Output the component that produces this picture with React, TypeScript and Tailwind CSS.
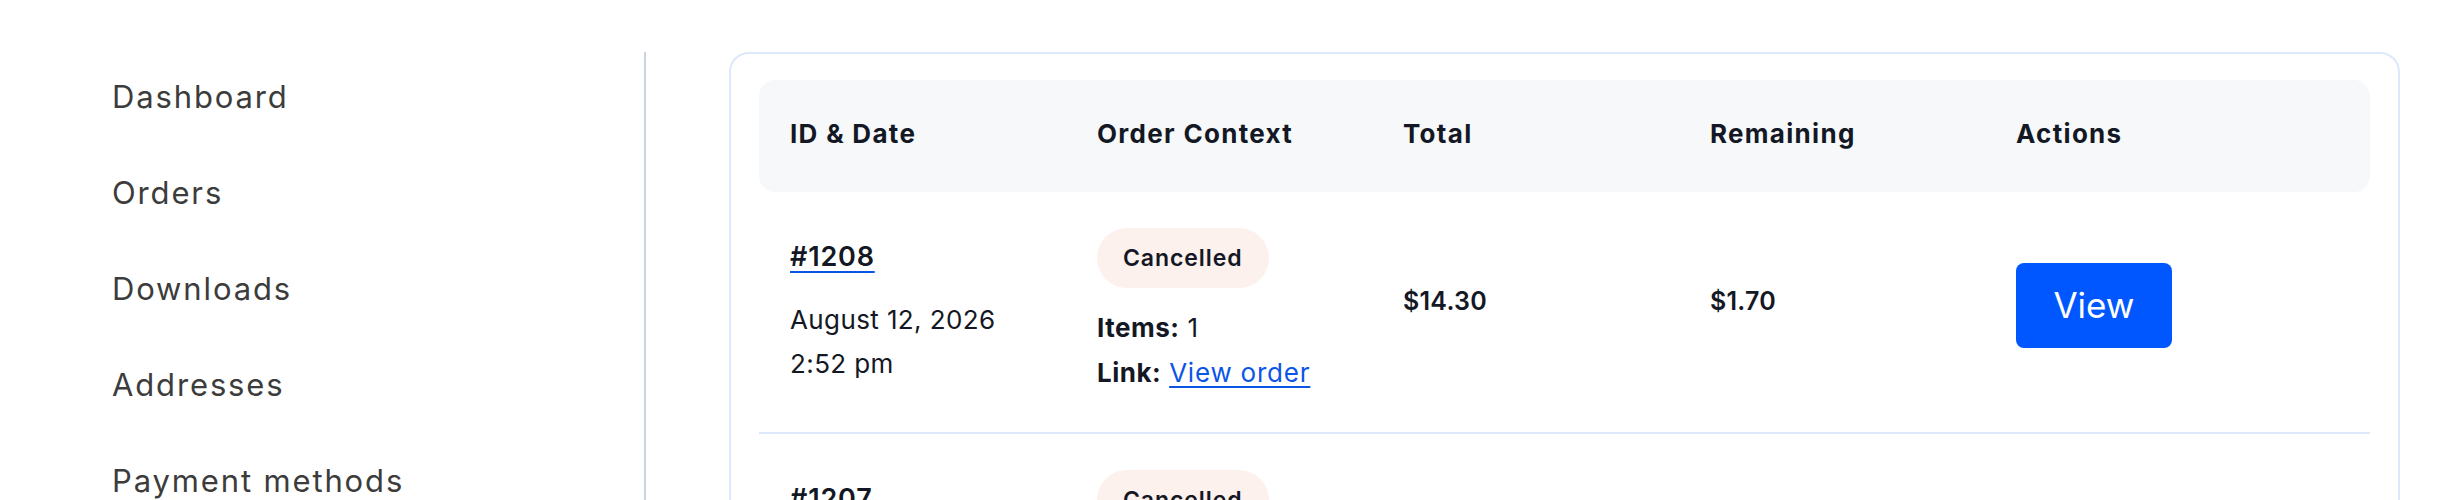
import React from 'react';

interface Order {
  id: string;
  date: string;
  time: string;
  status: string;
  items: number;
  total: string;
  remaining: string;
}

const navItems = ['Dashboard', 'Orders', 'Downloads', 'Addresses', 'Payment methods', 'Account details', 'Log out'];

const orders: Order[] = [
  { id: '#1208', date: 'August 12, 2026', time: '2:52 pm', status: 'Cancelled', items: 1, total: '$14.30', remaining: '$1.70' },
  { id: '#1207', date: 'August 12, 2026', time: '2:41 pm', status: 'Cancelled', items: 1, total: '$14.30', remaining: '$1.70' },
];

const columns = ['ID & Date', 'Order Context', 'Total', 'Remaining', 'Actions'];

const gridCols = 'grid grid-cols-[307px_306px_307px_306px_1fr] pl-[31px]';

const OrderRow: React.FC<{ order: Order }> = ({ order }) => (
  <div className={`${gridCols} items-center py-[36px] border-b-2 border-[#dde9fb] text-[#141824]`}>
    <div className="flex flex-col -mt-[4px]">
      <a href="#" className="text-[27px] leading-[44px] font-semibold tracking-[0.03em] underline decoration-[#0b55e6] decoration-2 underline-offset-[5px] w-fit">
        {order.id}
      </a>
      <div className="mt-[19px] text-[26px] leading-[44px] tracking-[0.015em]">
        <p>{order.date}</p>
        <p>{order.time}</p>
      </div>
    </div>
    <div className="flex flex-col">
      <span className="w-fit h-[60px] px-[26px] flex items-center rounded-full bg-[#fdf1ee] text-[23px] font-semibold tracking-[0.04em]">
        {order.status}
      </span>
      <p className="mt-[18px] text-[26px] leading-[44px] tracking-[0.02em]">
        <span className="font-bold">Items:</span> {order.items}
      </p>
      <p className="text-[26px] leading-[46px] tracking-[0.02em]">
        <span className="font-bold">Link:</span>{' '}
        <a href="#" className="text-[#0b55e6] underline underline-offset-[4px] tracking-[0.03em]">View order</a>
      </p>
    </div>
    <div className="text-[25px] font-semibold tracking-[0.01em] -mt-[20px]">{order.total}</div>
    <div className="text-[25px] font-semibold tracking-[0.01em] -mt-[20px]">{order.remaining}</div>
    <div className="-mt-[14px]">
      <button className="w-[156px] h-[85px] rounded-[8px] bg-[#0057ff] text-white text-[35px]">View</button>
    </div>
  </div>
);

const App: React.FC = () => {
  return (
    <div className="w-[2464px] h-[500px] overflow-hidden bg-white font-[Inter,ui-sans-serif,sans-serif] flex pt-[52px]">
      <aside className="w-[646px] shrink-0 border-r-2 border-[#c9d4e1]">
        <ul className="-mt-[3px] pl-[112px]">
          {navItems.map(item => (
            <li key={item} className="h-[96px] flex items-center text-[31px] tracking-[0.06em] text-[#3c3c3c]">
              <a href="#">{item}</a>
            </li>
          ))}
        </ul>
      </aside>
      <main className="ml-[83px] w-[1671px]">
        <div className="border-2 border-[#dde8fb] rounded-[20px] pt-[26px] px-[28px]">
          <div className={`${gridCols} h-[112px] items-center pb-[5px] rounded-[16px] bg-[#f6f8fa] text-[26px] font-bold tracking-[0.05em] text-[#141824]`}>
            {columns.map(col => (
              <div key={col}>{col}</div>
            ))}
          </div>
          {orders.map(order => (
            <OrderRow key={order.id} order={order} />
          ))}
        </div>
      </main>
    </div>
  );
};

export default App;
